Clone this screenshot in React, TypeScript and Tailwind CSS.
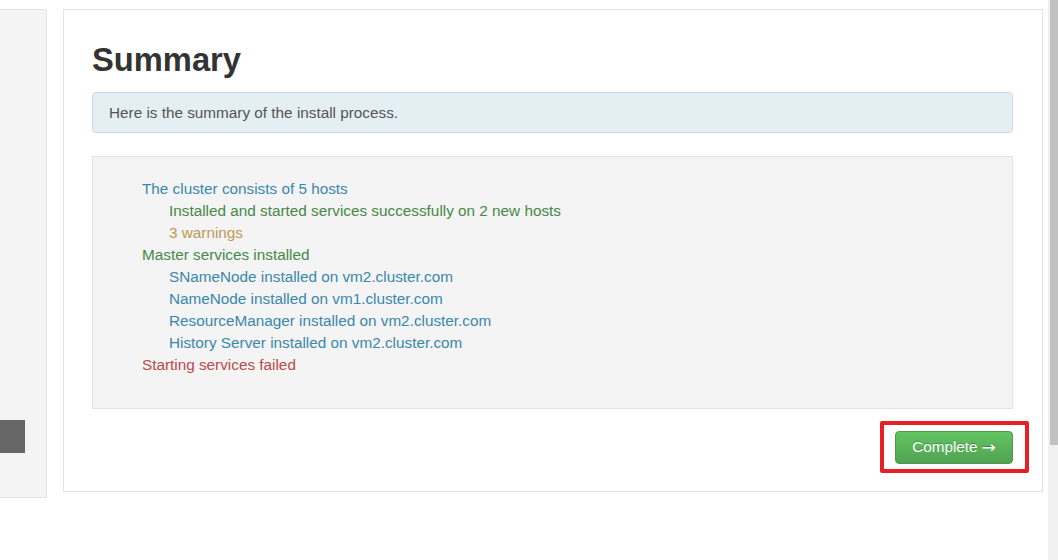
import React from "react";

type Line = {
  text: string;
  color: string;
  nested?: boolean;
};

const lines: Line[] = [
  { text: "The cluster consists of 5 hosts", color: "text-[#3a87ad]" },
  { text: "Installed and started services successfully on 2 new hosts", color: "text-[#468847]", nested: true },
  { text: "3 warnings", color: "text-[#c09853]", nested: true },
  { text: "Master services installed", color: "text-[#468847]" },
  { text: "SNameNode installed on vm2.cluster.com", color: "text-[#3a87ad]", nested: true },
  { text: "NameNode installed on vm1.cluster.com", color: "text-[#3a87ad]", nested: true },
  { text: "ResourceManager installed on vm2.cluster.com", color: "text-[#3a87ad]", nested: true },
  { text: "History Server installed on vm2.cluster.com", color: "text-[#3a87ad]", nested: true },
  { text: "Starting services failed", color: "text-[#b94a48]" },
];

function SidePanel() {
  return (
    <div className="w-[47px] h-[489px] shrink-0 bg-[#f4f4f4] border border-l-0 border-[#e3e3e3]">
      {/* cut-off button */}
      <div className="mt-[410px] w-[25px] h-[33px] bg-[#666666]" />
    </div>
  );
}

function SummaryPanel() {
  return (
    <div className="ml-[16px] w-[980px] shrink-0 bg-white border border-[#e3e3e3] pt-[28px] pl-[28px] pr-[29px] pb-[27px]">
      <h2 className="text-[32.7px] leading-[44px] font-bold text-[#333333] mb-[10px]">
        Summary
      </h2>

      <div className="bg-[#e4eff4] border border-[#cbd9e0] rounded-[4px] pt-[9px] pb-[8px] pl-[16px] text-[#555555] leading-[22px]">
        Here is the summary of the install process.
      </div>

      <div className="mt-[23px] bg-[#f4f4f4] border border-[#e3e3e3] pt-[21px] pb-[32px] pl-[49px] leading-[22px]">
        {lines.map((line) => (
          <div key={line.text} className={`${line.color} ${line.nested ? "pl-[27px]" : ""}`}>
            {line.text}
          </div>
        ))}
      </div>

      <div className="mt-[22px] flex justify-end">
        <div className="relative">
          <button className="w-[118px] h-[33px] rounded-[4px] border border-[#4c9a4c] bg-gradient-to-b from-[#62c462] to-[#51a351] text-white text-[15.3px] [text-shadow:0_-1px_0_rgba(0,0,0,0.25)] flex items-center justify-center gap-[4px]">
            <span>Complete</span>
            <span className="[font-family:'DejaVu_Sans',sans-serif] text-[17px] leading-none">→</span>
          </button>
          {/* highlight box */}
          <div className="absolute -left-[15px] -right-[16px] -top-[10px] -bottom-[9px] border-[4px] border-[#e81e25] rounded-[2px] pointer-events-none" />
        </div>
      </div>
    </div>
  );
}

export default function App() {
  return (
    <div className="flex w-full h-[560px] bg-white overflow-hidden text-[15.3px] [font-family:'Liberation_Sans',Arial,sans-serif]">
      <div className="flex-1 flex items-start pt-[9px]">
        <SidePanel />
        <SummaryPanel />
      </div>

      {/* scrollbar */}
      <div className="w-[10px] h-full bg-[#f1f1f1] flex justify-end">
        <div className="w-[8px] h-[445px] bg-[#c1c1c1]" />
      </div>
    </div>
  );
}
